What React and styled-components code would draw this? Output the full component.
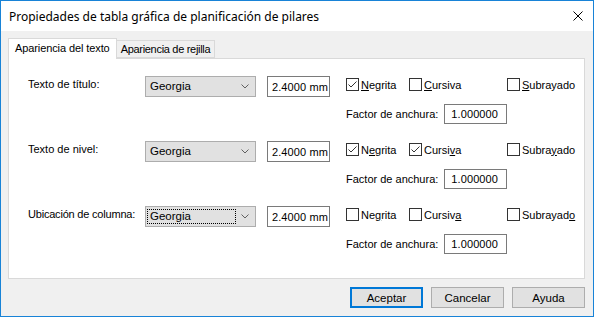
import React from "react";
import styled, { createGlobalStyle } from "styled-components";

const GlobalStyle = createGlobalStyle`
  html, body {
    margin: 0;
    padding: 0;
    background: #ffffff;
  }
  * {
    box-sizing: border-box;
  }
`;

const Window = styled.div`
  width: 594px;
  height: 317px;
  border: 1px solid #1883d7;
  background: #f0f0f0;
  display: flex;
  flex-direction: column;
  font-family: "Liberation Sans", Arial, sans-serif;
  font-size: 11px;
  color: #000;
`;

const TitleBar = styled.div`
  height: 30px;
  background: #fff;
  display: flex;
  align-items: center;
  justify-content: space-between;
  padding: 0 10px 0 8px;
  font-family: "Noto Sans", sans-serif;
  font-size: 12px;
`;

const CloseIcon = styled.svg`
  width: 10px;
  height: 10px;
  margin-top: -1px;
`;

const Body = styled.div`
  flex: 1;
  display: flex;
  flex-direction: column;
  padding: 7px 8px 8px 7px;
`;

const Tabs = styled.div`
  display: flex;
  align-items: flex-end;
  height: 20px;
  position: relative;
  z-index: 1;
`;

const Tab = styled.div`
  height: ${(p) => (p.$active ? "21px" : "18px")};
  margin-bottom: ${(p) => (p.$active ? "-1px" : "0")};
  padding: ${(p) => (p.$active ? "3px 6px 0 6px" : "2px 4px 0 4px")};
  background: ${(p) => (p.$active ? "#fff" : "#f0f0f0")};
  border: 1px solid #d9d9d9;
  border-bottom: ${(p) => (p.$active ? "none" : "1px solid #d9d9d9")};
  border-left: ${(p) => (p.$active ? "1px solid #d9d9d9" : "none")};
  letter-spacing: ${(p) => (p.$active ? "-0.1px" : "-0.3px")};
  white-space: nowrap;
`;

const Panel = styled.div`
  flex: 1;
  background: #fff;
  border: 1px solid #d9d9d9;
  padding: 17px 0 0 19px;
  display: flex;
  flex-direction: column;
`;

const FontRow = styled.div`
  display: flex;
  align-items: flex-start;
  height: 65px;
`;

const RowLabel = styled.div`
  width: 117px;
  padding-top: 2px;
  letter-spacing: ${(p) => (p.$tight ? "-0.2px" : "0")};
`;

const Combo = styled.div`
  width: 111px;
  height: 21px;
  background: #e1e1e1;
  border: 1px solid #adadad;
  display: flex;
  align-items: center;
  justify-content: space-between;
  padding: 0 6px 0 1px;
`;

const ComboValue = styled.div`
  width: 89px;
  height: 15px;
  line-height: 13px;
  padding-left: 2px;
  font-size: 11.5px;
  border: 1px dotted ${(p) => (p.$focused ? "#000" : "transparent")};
`;

const Chevron = styled.svg`
  width: 8px;
  height: 5px;
`;

const TextBox = styled.div`
  width: ${(p) => p.$width}px;
  height: ${(p) => p.$height}px;
  border: 1px solid #7a7a7a;
  background: #fff;
  display: flex;
  align-items: center;
  padding-left: ${(p) => p.$pad}px;
  font-size: 11px;
  letter-spacing: 0.1px;
  white-space: nowrap;
  overflow: hidden;
`;

const MmBox = styled(TextBox)`
  margin-left: 11px;
`;

const Options = styled.div`
  margin-left: 16px;
  display: flex;
  flex-direction: column;
`;

const CheckRow = styled.div`
  display: flex;
  align-items: center;
  height: 17px;
`;

const CheckItem = styled.label`
  display: flex;
  align-items: center;
  width: ${(p) => p.$width}px;
  gap: 2px;
`;

const Box = styled.span`
  width: 13px;
  height: 13px;
  border: 1px solid #333;
  background: #fff;
  display: flex;
  align-items: center;
  justify-content: center;
`;

const FactorRow = styled.div`
  display: flex;
  align-items: center;
  margin-top: 11px;
  gap: 6px;
`;

const Footer = styled.div`
  display: flex;
  justify-content: flex-end;
  gap: 8px;
  margin-top: 8px;
`;

const Button = styled.div`
  width: 73px;
  height: 21px;
  display: flex;
  align-items: center;
  justify-content: center;
  background: #e1e1e1;
  border: ${(p) => (p.$primary ? "2px solid #0078d7" : "1px solid #adadad")};
  font-size: 11.5px;
`;

const Check = ({ checked }) => (
  <Box>
    {checked && (
      <svg width="11" height="11" viewBox="0 0 11 11">
        <polyline points="1.5,5.5 4,8 9.5,2.5" fill="none" stroke="#333" strokeWidth="1" />
      </svg>
    )}
  </Box>
);

const Acc = ({ text, at }) => (
  <span>
    {text.slice(0, at)}
    <u>{text[at]}</u>
    {text.slice(at + 1)}
  </span>
);

const rows = [
  { label: "Texto de título:", bold: true, italic: false, acc: [0, 0, 0] },
  { label: "Texto de nivel:", bold: true, italic: true, acc: [1, 5, 5] },
  { label: "Ubicación de columna:", bold: false, italic: false, acc: [2, 6, 8], focused: true },
];

export default function App() {
  return (
    <>
      <GlobalStyle />
      <Window>
        <TitleBar>
          <span>Propiedades de tabla gráfica de planificación de pilares</span>
          <CloseIcon viewBox="0 0 10 10">
            <path d="M0.5 0.5 L9.5 9.5 M9.5 0.5 L0.5 9.5" stroke="#000" strokeWidth="1" />
          </CloseIcon>
        </TitleBar>
        <Body>
          <Tabs>
            <Tab $active>Apariencia del texto</Tab>
            <Tab>Apariencia de rejilla</Tab>
          </Tabs>
          <Panel>
            {rows.map((r) => (
              <FontRow key={r.label}>
                <RowLabel $tight={r.focused}>{r.label}</RowLabel>
                <Combo>
                  <ComboValue $focused={r.focused}>Georgia</ComboValue>
                  <Chevron viewBox="0 0 8 5">
                    <polyline points="0.5,0.5 4,4 7.5,0.5" fill="none" stroke="#606060" strokeWidth="1" />
                  </Chevron>
                </Combo>
                <MmBox $width={63} $height={21} $pad={4}>2.4000 mm</MmBox>
                <Options>
                  <CheckRow>
                    <CheckItem $width={63}>
                      <Check checked={r.bold} />
                      <Acc text="Negrita" at={r.acc[0]} />
                    </CheckItem>
                    <CheckItem $width={98}>
                      <Check checked={r.italic} />
                      <Acc text="Cursiva" at={r.acc[1]} />
                    </CheckItem>
                    <CheckItem $width={70}>
                      <Check checked={false} />
                      <Acc text="Subrayado" at={r.acc[2]} />
                    </CheckItem>
                  </CheckRow>
                  <FactorRow>
                    <span>Factor de anchura:</span>
                    <TextBox $width={63} $height={20} $pad={6}>1.000000</TextBox>
                  </FactorRow>
                </Options>
              </FontRow>
            ))}
          </Panel>
          <Footer>
            <Button $primary>Aceptar</Button>
            <Button>Cancelar</Button>
            <Button>Ayuda</Button>
          </Footer>
        </Body>
      </Window>
    </>
  );
}
